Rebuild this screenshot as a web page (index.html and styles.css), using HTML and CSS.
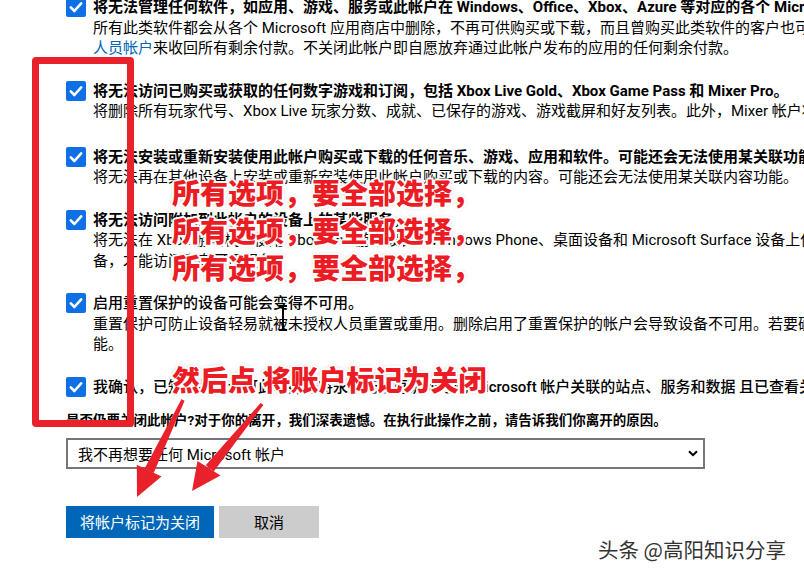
FILE: index.html
```html
<!DOCTYPE html>
<html lang="zh-CN">
<head>
<meta charset="utf-8">
<title>关闭帐户</title>
<link rel="stylesheet" href="styles.css">
</head>
<body>
<div class="page">
  <ul class="items">
    <li class="item">
      <span class="box"><svg viewBox="0 0 20 20" width="20" height="20"><path d="M4.8 10.4 L8.4 14 L15.2 6.4" fill="none" stroke="#fff" stroke-width="2.6" stroke-linecap="round" stroke-linejoin="round"/></svg></span>
      <div class="text">
        <div class="title">将无法管理任何软件，如应用、游戏、服务或此帐户在 Windows、Office、Xbox、Azure 等对应的各个 Microsoft 应用商店中发布的软件。</div>
        <div class="desc">所有此类软件都会从各个 Microsoft 应用商店中删除，不再可供购买或下载，而且曾购买此类软件的客户也可能无法再使用它们。你需要登录开发</div>
        <div class="desc"><span class="link">人员帐户</span>来收回所有剩余付款。不关闭此帐户即自愿放弃通过此帐户发布的应用的任何剩余付款。</div>
      </div>
    </li>
    <li class="item">
      <span class="box"><svg viewBox="0 0 20 20" width="20" height="20"><path d="M4.8 10.4 L8.4 14 L15.2 6.4" fill="none" stroke="#fff" stroke-width="2.6" stroke-linecap="round" stroke-linejoin="round"/></svg></span>
      <div class="text">
        <div class="title">将无法访问已购买或获取的任何数字游戏和订阅，包括 Xbox Live Gold、Xbox Game Pass 和 Mixer Pro。</div>
        <div class="desc">将删除所有玩家代号、Xbox Live 玩家分数、成就、已保存的游戏、游戏截屏和好友列表。此外，Mixer 帐户将被永久删除。</div>
      </div>
    </li>
    <li class="item">
      <span class="box"><svg viewBox="0 0 20 20" width="20" height="20"><path d="M4.8 10.4 L8.4 14 L15.2 6.4" fill="none" stroke="#fff" stroke-width="2.6" stroke-linecap="round" stroke-linejoin="round"/></svg></span>
      <div class="text">
        <div class="title">将无法安装或重新安装使用此帐户购买或下载的任何音乐、游戏、应用和软件。可能还会无法使用某关联功能。</div>
        <div class="desc">将无法再在其他设备上安装或重新安装使用此帐户购买或下载的内容。可能还会无法使用某关联内容功能。</div>
      </div>
    </li>
    <li class="item">
      <span class="box"><svg viewBox="0 0 20 20" width="20" height="20"><path d="M4.8 10.4 L8.4 14 L15.2 6.4" fill="none" stroke="#fff" stroke-width="2.6" stroke-linecap="round" stroke-linejoin="round"/></svg></span>
      <div class="text">
        <div class="title">将无法访问附加到此帐户的设备上的某些服务。</div>
        <div class="desc">将无法在 Xbox 游戏机上使用 Xbox One 游戏设备、Windows Phone、桌面设备和 Microsoft Surface 设备上使用某些服务。你可能需要重置这些设</div>
        <div class="desc">备，才能访问所有可用服务。</div>
      </div>
    </li>
    <li class="item">
      <span class="box"><svg viewBox="0 0 20 20" width="20" height="20"><path d="M4.8 10.4 L8.4 14 L15.2 6.4" fill="none" stroke="#fff" stroke-width="2.6" stroke-linecap="round" stroke-linejoin="round"/></svg></span>
      <div class="text">
        <div class="title medium">启用重置保护的设备可能会变得不可用。</div>
        <div class="desc">重置保护可防止设备轻易就被未授权人员重置或重用。删除启用了重置保护的帐户会导致设备不可用。若要确保设备可用，请先关闭重置保护功</div>
        <div class="desc">能。</div>
      </div>
    </li>
    <li class="item">
      <span class="box"><svg viewBox="0 0 20 20" width="20" height="20"><path d="M4.8 10.4 L8.4 14 L15.2 6.4" fill="none" stroke="#fff" stroke-width="2.6" stroke-linecap="round" stroke-linejoin="round"/></svg></span>
      <div class="text">
        <div class="title medium">我确认，已知晓并且认可此项操作将永久无法再访问与此 Microsoft 帐户关联的站点、服务和数据 且已查看关闭帐户的所有后果。</div>
      </div>
    </li>
  </ul>
  <p class="question">是否仍要关闭此帐户?对于你的离开，我们深表遗憾。在执行此操作之前，请告诉我们你离开的原因。</p>
  <div class="select">
    <span>我不再想要任何 Microsoft 帐户</span>
    <svg width="10" height="7" viewBox="0 0 10 7"><path d="M1 1.2 L5 5.2 L9 1.2" fill="none" stroke="#000" stroke-width="2"/></svg>
  </div>
  <div class="actions">
    <button class="btn primary">将帐户标记为关闭</button>
    <button class="btn secondary">取消</button>
  </div>
</div>

<div class="annot">
  <div class="frame"></div>
  <div class="note note-all">
    <div>所有选项，要全部选择，</div>
    <div>所有选项，要全部选择，</div>
    <div>所有选项，要全部选择，</div>
  </div>
  <div class="note note-then">然后点 将账户标记为关闭</div>
  <svg class="marks" width="804" height="578" viewBox="0 0 804 578">
    <g fill="#e8212b">
      <polygon points="184.6,400.7 181.4,399.3 144.5,468.7 153.7,472.9"/>
      <polygon points="137,497 161.5,476.6 136.8,464.8"/>
      <polygon points="263.4,405 260.6,403 205.7,465.2 213.7,471.4"/>
      <polygon points="192,491 220.5,475.5 197.5,461"/>
    </g>
    <g stroke="#000" stroke-width="2" fill="none">
      <path d="M283 307 V329"/>
      <path d="M279 306 H287 M279 330 H287"/>
    </g>
  </svg>
  <div class="watermark">头条 @高阳知识分享</div>
</div>
</body>
</html>
```

FILE: styles.css
```css
html, body {
  margin: 0;
  padding: 0;
}

body {
  width: 804px;
  height: 578px;
  overflow: hidden;
  position: relative;
  background: #fff;
  color: #000;
  font-family: Roboto, "Noto Sans CJK SC", sans-serif;
}

.page {
  width: 1400px;
  padding-left: 66px;
  margin-top: -3px;
}

.items {
  list-style: none;
  margin: 0;
  padding: 0;
  display: flex;
  flex-direction: column;
  gap: 22px;
}

.item {
  display: flex;
  align-items: flex-start;
  gap: 7px;
}

.item:nth-child(3) {
  margin-top: 3px;
}

.box {
  flex: none;
  width: 20px;
  height: 20px;
  display: flex;
  background: #0f6fe5;
  border-radius: 2px;
}

.text {
  font-size: 15px;
  line-height: 20.5px;
  white-space: nowrap;
}

.title {
  font-weight: 700;
}

.title.medium {
  font-weight: 500;
}

.link {
  color: #0067b8;
}

.question {
  margin: 13px 0 0;
  font-size: 13.5px;
  line-height: 20.5px;
  font-weight: 700;
  white-space: nowrap;
}

.select {
  margin-top: 7px;
  width: 639px;
  height: 31px;
  box-sizing: border-box;
  border: 2px solid #767676;
  display: flex;
  align-items: center;
  justify-content: space-between;
  padding: 0 5px 0 10px;
  font-size: 15px;
}

.actions {
  margin-top: 37px;
  display: flex;
  gap: 5px;
}

.btn {
  height: 32px;
  border: 0;
  padding: 0;
  font-family: inherit;
  font-size: 15px;
}

.primary {
  width: 148px;
  background: #0067b8;
  color: #fff;
}

.secondary {
  width: 100px;
  background: #cccccc;
  color: #000;
}

/* annotation layer */
.annot {
  position: absolute;
  inset: 0;
  pointer-events: none;
}

.frame {
  position: absolute;
  left: 32px;
  top: 57px;
  width: 102px;
  height: 370px;
  box-sizing: border-box;
  border: 7px solid #e8212b;
  border-radius: 4px;
}

.note {
  position: absolute;
  left: 172px;
  font-family: "Noto Sans CJK SC", sans-serif;
  font-weight: 900;
  font-size: 28px;
  line-height: 37.5px;
  color: #ec1c24;
  white-space: nowrap;
  text-shadow:
    -2px 0 #fff, 2px 0 #fff, 0 -2px #fff, 0 2px #fff,
    -1.5px -1.5px #fff, 1.5px 1.5px #fff, -1.5px 1.5px #fff, 1.5px -1.5px #fff,
    0 0 5px rgba(0, 0, 0, 0.3);
}

.note-all {
  top: 174px;
}

.note-then {
  top: 361px;
}

.marks {
  position: absolute;
  left: 0;
  top: 0;
}

.watermark {
  position: absolute;
  left: 598px;
  top: 537px;
  font-family: "Noto Sans CJK SC", sans-serif;
  font-size: 20.5px;
  line-height: 24px;
  color: #333;
  white-space: nowrap;
  text-shadow: 0 0 2px #fff, 1px 1px 0 #fff;
}
```
